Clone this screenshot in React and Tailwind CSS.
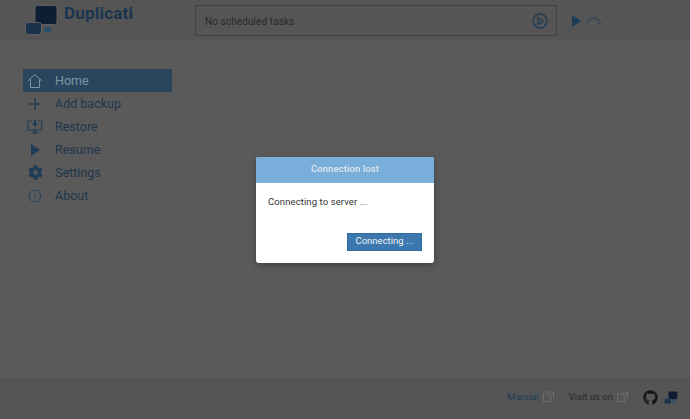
import { FaGithub, FaCog } from "react-icons/fa";
import { Info } from "lucide-react";

const font = "font-['Roboto','Liberation_Sans',sans-serif]";

function Logo({ className }) {
  return (
    <svg viewBox="0 0 33 30" className={className}>
      <rect x="10" y="0.5" width="22" height="19" rx="2.5" fill="#0d1e32" stroke="#676767" strokeWidth="0.8" />
      <rect x="0.5" y="17.5" width="16" height="12" rx="2.5" fill="#1a324b" stroke="#676767" strokeWidth="0.8" />
      <rect x="19" y="22" width="7" height="5" fill="#2a5069" />
    </svg>
  );
}

function HomeIcon() {
  return (
    <svg viewBox="0 0 16 16" className="w-4 h-4" fill="none" stroke="#7f95a6" strokeWidth="1">
      <path d="M1 8 8 1.5 15 8" />
      <path d="M3.5 6.5V14.5H12.5V6.5" />
    </svg>
  );
}

function PlusIcon() {
  return (
    <svg viewBox="0 0 16 16" className="w-4 h-4" fill="none" stroke="#1f3c56" strokeWidth="1.5">
      <path d="M2 8H14M8 2V14" />
    </svg>
  );
}

function RestoreIcon() {
  return (
    <svg viewBox="0 0 16 16" className="w-4 h-4" fill="#1f3c56">
      <path d="M0.5 1.5H5V2.6H1.6V10.4H14.4V2.6H11V1.5H15.5V11.5H0.5Z" />
      <path d="M7 0.5H9V4.5H11L8 8 5 4.5H7Z" />
      <path d="M6.5 11.5H9.5V13.5H11.5V14.5H4.5V13.5H6.5Z" />
    </svg>
  );
}

function PlayIcon({ className }) {
  return (
    <svg viewBox="0 0 9 12" className={className} fill="#1f3c56">
      <path d="M0 0 9 6 0 12Z" />
    </svg>
  );
}

function ExternalIcon() {
  return (
    <svg viewBox="0 0 11 11" className="w-[11px] h-[11px]" fill="none" stroke="#6f6f6f" strokeWidth="1">
      <path d="M7 3H0.5V10.5H8V5" />
      <path d="M4 1H10.5V7M10 1.5 5 6.5" />
    </svg>
  );
}

function NavItem({ icon, label, active }) {
  return (
    <div className={`flex items-center h-[23px] ${active ? "bg-[#2a465e] text-[#7f95a6]" : "text-[#1f364d]"}`}>
      <div className="w-[24px] flex justify-center text-[#1f3c56]">{icon}</div>
      <span className="ml-2 pt-[2px] text-[12.5px]">{label}</span>
    </div>
  );
}

export default function App() {
  return (
    <div className={`relative h-screen flex flex-col bg-[#5a5a5a] ${font}`}>
      {/* Header */}
      <header className="h-10 bg-[#555555] flex items-center pl-[25px]">
        <Logo className="w-[33px] h-[30px]" />
        <div className="w-[137px] pl-[6px] self-start pt-[1px] text-[17px] font-bold text-[#1b3650] tracking-[0.2px]">Duplicati</div>
        <div className="w-[362px] h-[31px] border border-[#414435] flex items-center justify-between pl-[9px] pr-[8px] mt-[1px]">
          <span className="text-[10px] text-[#2a2a26] tracking-[0.1px] pt-[2px]">No scheduled tasks</span>
          <svg viewBox="0 0 16 16" className="w-4 h-4" fill="none" stroke="#1f3c56" strokeWidth="1.3">
            <circle cx="8" cy="8" r="7" />
            <path d="M6 4.5 11 8 6 11.5Z" />
          </svg>
        </div>
        <PlayIcon className="w-[9px] h-3 ml-[15px] mt-[1px]" />
        <svg viewBox="0 0 15 8" className="w-[15px] h-2 ml-[5px] mt-[2px]" fill="none" stroke="#1f3c56" strokeWidth="2" strokeDasharray="1.2 1.8">
          <path d="M1 7.5A6.5 6.5 0 0 1 14 7.5" />
        </svg>
      </header>

      {/* Sidebar */}
      <main className="flex-1 pt-[29px] pl-[23px]">
        <nav className="w-[149px] flex flex-col">
          <NavItem active label="Home" icon={<HomeIcon />} />
          <NavItem label="Add backup" icon={<PlusIcon />} />
          <NavItem label="Restore" icon={<RestoreIcon />} />
          <NavItem label="Resume" icon={<PlayIcon className="w-[9px] h-3" />} />
          <NavItem label="Settings" icon={<FaCog className="w-[15px] h-[15px]" />} />
          <NavItem label="About" icon={<Info className="w-[14px] h-[14px]" strokeWidth={1.4} />} />
        </nav>
      </main>

      {/* Footer */}
      <footer className="h-[41px] bg-[#555555] flex items-center justify-end pr-[12px] pb-[2px]">
        <span className="text-[9.5px] text-[#1c3d5a]">Manual</span>
        <span className="ml-[4px] mb-[2px]"><ExternalIcon /></span>
        <span className="ml-[15px] text-[9.5px] text-[#2a2a2a]">Visit us on</span>
        <span className="ml-[4px] mb-[2px]"><ExternalIcon /></span>
        <FaGithub className="ml-[15px] w-[15px] h-[15px] text-[#181818]" />
        <Logo className="ml-[6px] w-[14px] h-[13px]" />
      </footer>

      {/* Modal overlay */}
      <div className="absolute inset-0 flex items-center justify-center">
        <div className="w-[178px] h-[106px] bg-white rounded-[3px] overflow-hidden flex flex-col shadow-[0_2px_6px_rgba(0,0,0,0.3)]">
          <div className="h-[26px] bg-[#79aedb] flex items-center justify-center text-[9.5px] font-medium text-[#dfe6ea] tracking-[0.1px]">
            Connection lost
          </div>
          <div className="flex-1 flex flex-col px-3 pt-[12px] pb-3">
            <p className="text-[9.5px] text-[#333333] tracking-[0.1px]">Connecting to server ...</p>
            <div className="mt-auto flex justify-end">
              <div className="w-[75px] h-[18px] bg-[#3c78ae] border border-[#2f6b9e] flex items-center justify-center text-[9.5px] text-[#eef3f7]">
                Connecting ...
              </div>
            </div>
          </div>
        </div>
      </div>
    </div>
  );
}
